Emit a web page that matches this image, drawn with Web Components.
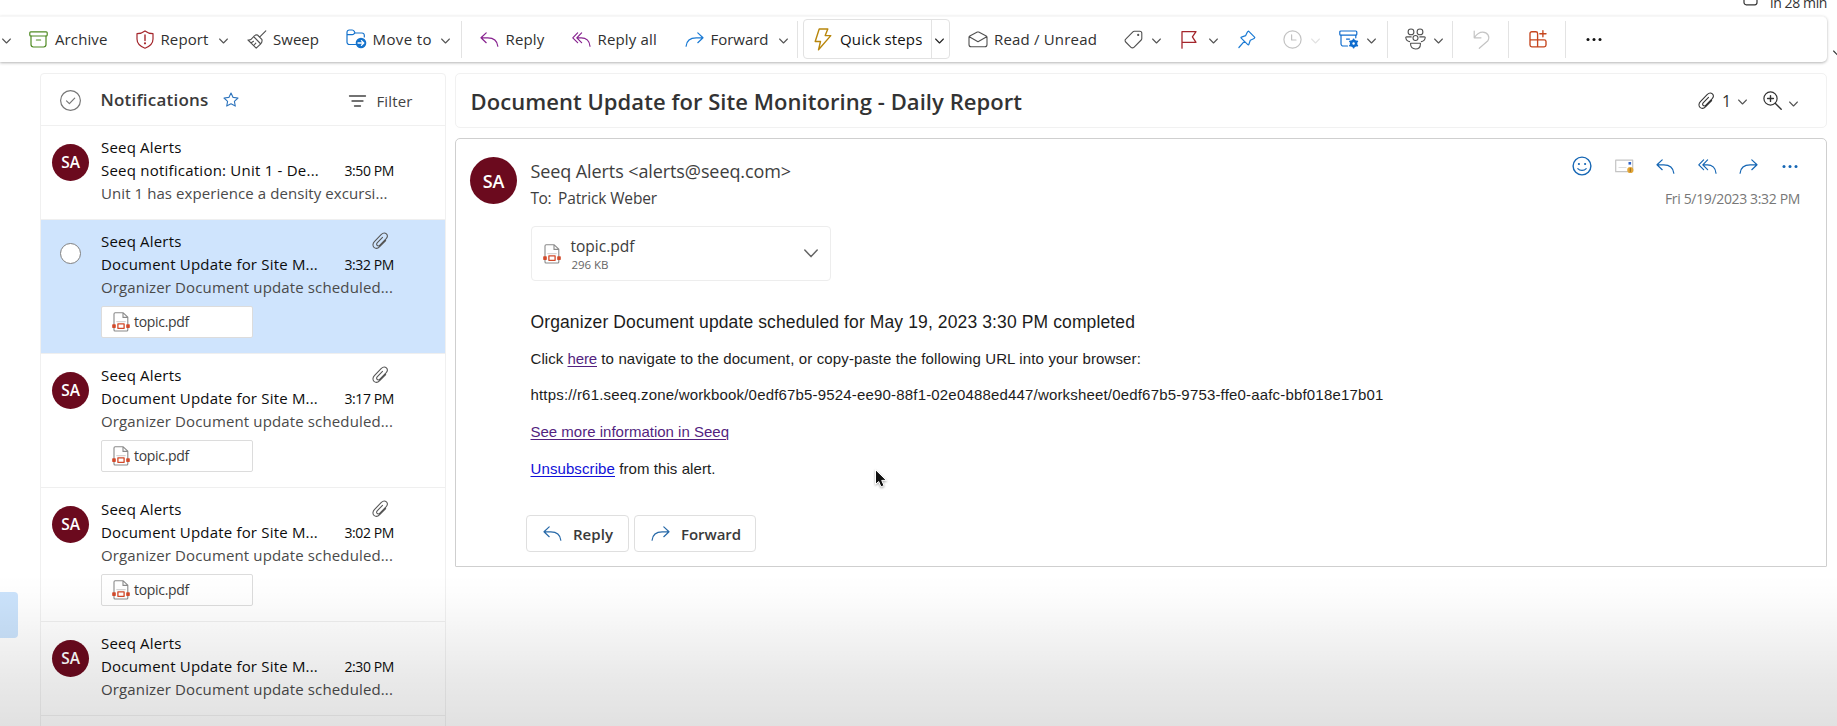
<!DOCTYPE html>
<html lang="en">
<head>
<meta charset="utf-8">
<title>Mail - Notifications</title>
<style>
html,body{margin:0;height:100%;overflow:hidden;background:#fff}
body{font-family:"Open Sans","Noto Sans",sans-serif;color:#323232}
</style>
</head>
<body>
<mail-app></mail-app>
<script>
const ICONS = {
chev:[9,6,'<path d="M.6 1l3.9 4L8.4 1" stroke-width="1.1"/>'],
chevL:[14,9,'<path d="M.8 1L7 7.6 13.2 1" stroke-width="1.5"/>'],
archive:[19,17,'<rect x=".8" y=".8" width="17.4" height="4.2" rx="1"/><path d="M2 5v8.6a2.4 2.4 0 0 0 2.4 2.4h10.2a2.4 2.4 0 0 0 2.4-2.4V5M7.4 9h4.2"/>'],
shield:[18,19,'<path d="M9 .9C6.6 2.7 4 3.6 1 3.7V9c0 4.300 2.900 7.300 8 9.200 5.100-1.900 8-4.900 8-9.200V3.700C14 3.600 11.400 2.700 9 .9z"/><path d="M9 5v5.600" stroke-width="1.400"/><circle cx="9" cy="13.300" r=".5"/>'],
broom:[20,19,'<g stroke-width="1.1"><path d="M18.800.8l-6 6M10.500 5l4.300 4.300c.6 1.700 0 3.500-1.300 4.800l-4.300 4.100L1 10c1.700.3 3.500-.6 4.600-2.300C6.800 5.800 8.600 4.600 10.500 5zM7 7l6.300 6.500M4.200 12.800l2.300-1.500M6.800 15.500l2-2.300"/></g>'],
move:[21,20,'<path d="M9.500 15.500H3.300A2.300 2.300 0 0 1 1 13.200V3.300A2.300 2.300 0 0 1 3.300 1h2.900c1 0 1.600.5 2 1.300L9 4H16a2.300 2.300 0 0 1 2.300 2.300V8M1 5.600h5.200c.8 0 1.200-.2 1.800-.8L9 4"/><circle cx="15" cy="14" r="5.300" fill="currentColor" stroke="none"/><path d="M12 14h5.600M15.400 11.600l2.400 2.400-2.400 2.400" stroke="#fff" stroke-width="1.300"/>'],
reply:[19,15,'<path d="M6.200.9L1 5.800l5.200 4.900M1.300 5.800h6.500c5.600 0 9.400 3 10 8.400"/>'],
replyall:[19,15,'<path d="M5.600.9L.8 5.800l4.800 4.900M9.600.9L4.800 5.800l4.800 4.900M5 5.800h4.300c4.700 0 8.300 3 8.700 8.400"/>'],
forward:[19,15,'<path d="M12.800.9L18 5.800l-5.200 4.900M17.700 5.800h-6.500C5.600 5.800 1.600 8.800 1.100 14.200"/>'],
bolt:[18,23,'<path d="M5.200 1h8.600l-2.600 6.600h5.600L4.500 21.800l2-8.300H1.200z" stroke-width="1.400"/>'],
mailopen:[20,17,'<path d="M1 6.200v7.300A2.300 2.300 0 0 0 3.300 15.800h13.400a2.300 2.300 0 0 0 2.300-2.300V6.200c0-.6-.3-1-.8-1.300L10.700 1.100a1.600 1.600 0 0 0-1.400 0L1.800 4.900c-.5.3-.8.7-.8 1.300zM1.300 5.800L10 10.700l8.700-4.900" stroke-width="1.1"/>'],
tag:[19,19,'<path d="M10.300 1.200h5.500a2 2 0 0 1 2 2v5.300c0 .6-.2 1.100-.6 1.500l-7.300 7.300a2 2 0 0 1-2.900 0l-5.300-5.300a2 2 0 0 1 0-2.900L8.900 1.800c.4-.4.9-.6 1.400-.6z" stroke-width="1.1"/><circle cx="14.200" cy="4.900" r=".5" fill="currentColor"/>'],
flag:[16,19,'<path d="M1 18.200V1.600h14l-3.600 5.300 3.600 5.400H1" stroke-width="1.300"/>'],
pin:[18,19,'<path d="M10.600 1.200l6.200 6.200c-.2.900-.8 1.300-1.700 1.600l-2.800 1.200-1.500 4.300c-.2.500-.6.600-1 .2L3.200 8.100c-.4-.4-.3-.9.200-1l4.300-1.500L9 2.700c.4-.9.800-1.300 1.600-1.500zM6.300 11.300L.9 17.500"/>'],
clock:[19,19,'<circle cx="9.500" cy="9.500" r="8.600"/><path d="M8.600 4.800V10h4.400"/>'],
archgear:[20,19,'<rect x=".8" y="1" width="17" height="4.200" rx="1"/><path d="M2 5.300v8.300A2.300 2.300 0 0 0 4.300 16h4.200M16.800 5.300v2.500M7.500 9.100h3"/><circle cx="14.600" cy="13.500" r="3.700" fill="currentColor" stroke="none"/><path d="M14.600 9.400v8.200M11 11.400l7.200 4.200M11 15.600l7.200-4.200" stroke-width="1.900"/><circle cx="14.600" cy="13.500" r="1.200" fill="#fff" stroke="none"/>'],
people:[21,22,'<g stroke-width="1.1"><circle cx="6" cy="3.900" r="2.900"/><circle cx="15" cy="3.900" r="2.900"/><circle cx="10.500" cy="10" r="2.500"/><path d="M6.200 8.900H1.600c-.6 0-.9.400-.8.900.3 2.200 1.600 3.500 3.800 3.800M14.800 8.900h4.600c.6 0 .9.400.8.900-.3 2.200-1.600 3.500-3.800 3.800M5.600 15.200h9.800v1.100c0 2.800-1.900 4.700-4.900 4.700s-4.900-1.900-4.900-4.700z"/></g>'],
undo:[17,19,'<path d="M1.200 1v6.800h6.800M1.500 7.400c2.300-3.400 5-5.300 8.200-5.300 4.800 0 7.600 4.600 5.200 8.600L6.300 18.300"/>'],
apps:[18,18,'<path d="M8.600 16.900H2.800A1.800 1.800 0 0 1 1 15.100V3.500a1.800 1.800 0 0 1 1.800-1.800h4a1.800 1.800 0 0 1 1.800 1.800v13.400h6.600a1.800 1.800 0 0 0 1.800-1.800v-3.500a1.800 1.800 0 0 0-1.800-1.800H1M13.900 .6v6.200M10.800 3.700H17" stroke-width="1.350"/>'],
dots:[16,5,'<g fill="currentColor" stroke="none"><circle cx="2" cy="2.500" r="1.500"/><circle cx="8" cy="2.500" r="1.500"/><circle cx="14" cy="2.500" r="1.500"/></g>'],
check:[21,21,'<circle cx="10.500" cy="10.500" r="9.900"/><path d="M6.500 10.800l2.900 2.900 5.300-5.500"/>'],
star:[16,15,'<path d="M8 1l2.100 4.400 4.900.6-3.600 3.300.9 4.800L8 11.800l-4.300 2.300.9-4.800L1 6l4.900-.6z" stroke-width="1.100"/>'],
filter:[17,12,'<path d="M.5 1h16M3 6h11M5.500 11h6" stroke-width="1.300"/>'],
clip:[16,17,'<path d="M13.700 8.600l-6 6.100c-1.700 1.700-4.200 2-5.700.7-1.600-1.500-1.300-4 .4-5.800l6.700-7C10.700 1 13 .6 14.400 1.900c1.400 1.400 1.100 3.400-.4 5L7.900 13.100c-.9.900-2.100 1-2.800.3-.8-.8-.6-1.900.3-2.800l5.100-5.200" stroke-width="1.050"/>'],
zoom:[19,19,'<circle cx="7.500" cy="7.500" r="6.600"/><path d="M12.200 12.200l6 6M7.500 4.600v5.800M4.600 7.500h5.800" stroke-width="1.400"/>'],
smile:[20,20,'<circle cx="10" cy="10" r="8.900" stroke-width="1.400"/><circle cx="6.900" cy="8" r="1.100" fill="currentColor" stroke="none"/><circle cx="13.100" cy="8" r="1.100" fill="currentColor" stroke="none"/><path d="M5.800 12.700c2 2.300 6.400 2.300 8.400 0"/>'],
card:[19,15,'<rect x=".7" y="1.200" width="17" height="11.500" stroke="#c4c4c4"/><path d="M4 8.500h7" stroke="#ddd"/><rect x="13.500" y="3" width="2.600" height="2.600" fill="#2f62c8" stroke="none"/><circle cx="15.300" cy="11" r="3.100" fill="#e3a535" stroke="none"/><path d="M15.300 9.500v3" stroke="#8a6420" stroke-width=".9"/>'],
pdf:[18,20,'<path d="M2 18V2A1.200 1.200 0 0 1 3.200.8h8l4.600 4.400V18a1 1 0 0 1-1 1H3a1 1 0 0 1-1-1zM11 1v4.400h4.600" stroke="#8a8a8a" stroke-width="1.100" fill="#fff"/><path d="M4.800 9.600h8.400" stroke="#d4d4d4"/><g fill="#d2492a" stroke="none"><rect x=".2" y="12.300" width="3.600" height="3.600" rx=".6"/><rect x="14.200" y="12.300" width="3.600" height="3.600" rx=".6"/></g><rect x="5.900" y="11.900" width="6.200" height="4.400" stroke="#d2492a" stroke-width="1.300" fill="#fff"/>'],
cal:[15,6,'<path d="M1 0v2.600A2.200 2.200 0 0 0 3.200 4.800h8.600A2.200 2.200 0 0 0 14 2.600V0"/>'],
cursor:[14,20,'<path d="M1.500 1v14.300l3.200-2.800 2.300 5.400 3-1.300-2.300-5.200h4.400z" fill="#111" stroke="#fff" stroke-width="1"/>']
};

class UiIcon extends HTMLElement{
  connectedCallback(){
    const [w,h,body]=ICONS[this.getAttribute('name')];
    const r=this.shadowRoot||this.attachShadow({mode:'open'});
    r.innerHTML=`<style>:host{display:block;flex:none;width:${w}px;height:${h}px}svg{display:block;overflow:visible}</style>
    <svg width="${w}" height="${h}" viewBox="0 0 ${w} ${h}" fill="none" stroke="currentColor" stroke-width="1.2" stroke-linejoin="round" stroke-linecap="round">${body}</svg>`;
  }
}
customElements.define('ui-icon',UiIcon);

/* Single line label that spreads its tracking so the run fills the width given in "w". */
class FitText extends HTMLElement{
  connectedCallback(){
    const r=this.shadowRoot||this.attachShadow({mode:'open'});
    r.innerHTML=`<style>:host{display:block;flex:none;white-space:pre}span{display:inline-block;text-decoration:var(--line,none);text-underline-offset:2px;text-decoration-thickness:1px}</style><span><slot></slot></span>`;
    const s=r.querySelector('span'),w=+this.getAttribute('w');
    const n=this.textContent.length;
    s.style.letterSpacing='0px';
    s.style.letterSpacing=((w-s.getBoundingClientRect().width)/n).toFixed(3)+'px';
    this.style.width=w+'px';
  }
}

class UiAvatar extends HTMLElement{
  connectedCallback(){
    const r=this.shadowRoot||this.attachShadow({mode:'open'});
    r.innerHTML=`<style>:host{display:flex;flex:none;align-items:center;justify-content:center;width:var(--d,37px);height:var(--d,37px);border-radius:50%;background:#6b0a1e;color:#fff;font-weight:560;font-size:var(--f,15.500px);line-height:1;letter-spacing:-.2px}</style><span><slot></slot></span>`;
  }
}
customElements.define('ui-avatar',UiAvatar);

class MailToolbar extends HTMLElement{
  connectedCallback(){
    const r=this.attachShadow({mode:'open'});
    r.innerHTML=`<style>
    :host{display:flex;align-items:center;box-sizing:border-box;width:1827px;height:46px;padding-bottom:1px;border-top:1px solid #f7f7f7;border-radius:0 5px 5px 0;box-shadow:0 1px 3px rgba(0,0,0,.3);color:#303030;font-size:15px;line-height:22px;background:#fff}
    i{display:block;flex:none;width:1px;height:37px;background:#e3e3e3}
    .c{color:#555;margin-top:3px}
    .q{display:flex;flex:none;align-items:center;height:40px;width:146.500px;box-sizing:border-box;border:1px solid #e2e2e2;border-radius:4px;color:#111}
    .q i{height:38px}
    </style>
    <ui-icon class="c" name="chev" style="margin-left:2px"></ui-icon>
    <ui-icon name="archive" style="margin-left:18px;color:#4f8a22"></ui-icon><fit-text w="52.500" style="margin-left:7px">Archive</fit-text>
    <ui-icon name="shield" style="margin-left:28px;color:#a4262c"></ui-icon><fit-text w="48" style="margin-left:7px">Report</fit-text>
    <ui-icon class="c" name="chev" style="margin-left:10.500px"></ui-icon>
    <ui-icon name="broom" style="margin-left:19px;color:#505050"></ui-icon><fit-text w="46" style="margin-left:6px">Sweep</fit-text>
    <ui-icon name="move" style="margin-left:27px;color:#1472cc"></ui-icon><fit-text w="59.500" style="margin-left:5.500px">Move to</fit-text>
    <ui-icon class="c" name="chev" style="margin-left:8.500px"></ui-icon>
    <i style="margin-left:11px"></i>
    <ui-icon name="reply" style="margin-left:18px;color:#87228f"></ui-icon><fit-text w="39" style="margin-left:7px">Reply</fit-text>
    <ui-icon name="replyall" style="margin-left:27px;color:#87228f"></ui-icon><fit-text w="59.500" style="margin-left:7px">Reply all</fit-text>
    <ui-icon name="forward" style="margin-left:27.500px;color:#1a7ad4"></ui-icon><fit-text w="58" style="margin-left:7px">Forward</fit-text>
    <ui-icon class="c" name="chev" style="margin-left:10px"></ui-icon>
    <i style="margin-left:9px"></i>
    <div class="q" style="margin-left:5.500px"><ui-icon name="bolt" style="margin-left:10px;color:#b8860b"></ui-icon><fit-text w="82.500" style="margin-left:8px">Quick steps</fit-text><i style="margin-left:8px"></i><ui-icon class="c" name="chev" style="margin-left:3.500px;color:#222"></ui-icon></div>
    <ui-icon name="mailopen" style="margin-left:18.500px;color:#505050"></ui-icon><fit-text w="103" style="margin-left:6px">Read / Unread</fit-text>
    <ui-icon name="tag" style="margin-left:27px;color:#505050"></ui-icon><ui-icon class="c" name="chev" style="margin-left:8.500px"></ui-icon>
    <ui-icon name="flag" style="margin-left:20px;color:#a4262c"></ui-icon><ui-icon class="c" name="chev" style="margin-left:12px"></ui-icon>
    <ui-icon name="pin" style="margin-left:20px;color:#1a7ad4"></ui-icon>
    <ui-icon name="clock" style="margin-left:27px;color:#c2c2c2"></ui-icon><ui-icon class="c" name="chev" style="margin-left:9px;color:#e2e2e2"></ui-icon>
    <ui-icon name="archgear" style="margin-left:19px;color:#0f6cce"></ui-icon><ui-icon class="c" name="chev" style="margin-left:8px"></ui-icon>
    <i style="margin-left:11px"></i>
    <ui-icon name="people" style="margin-left:17px;color:#505050"></ui-icon><ui-icon class="c" name="chev" style="margin-left:8.500px"></ui-icon>
    <i style="margin-left:9px"></i>
    <ui-icon name="undo" style="margin-left:20px;color:#c4c4c4"></ui-icon>
    <i style="margin-left:18px"></i>
    <ui-icon name="apps" style="margin-left:19.500px;color:#c5451d"></ui-icon>
    <i style="margin-left:18px"></i>
    <ui-icon name="dots" style="margin-left:20px;color:#111"></ui-icon>`;
  }
}

class MailRow extends HTMLElement{
  connectedCallback(){
    const r=this.attachShadow({mode:'open'}),a=k=>this.getAttribute(k),att=this.hasAttribute('attach'),sel=this.hasAttribute('selected');
    r.innerHTML=`<style>
    :host{display:flex;box-sizing:border-box;height:${att?134:94}px;border-bottom:1px solid #efefef;padding:10px 0 0 11px;font-size:15px;line-height:23.200px;color:#0c0c0c;${sel?'background:#cfe4fd;':''}}
    ui-avatar{margin-top:8px}
    .o{box-sizing:border-box;width:21px;height:21px;border:1.500px solid #808080;border-radius:50%;background:#fff;margin:13px 8px 0 8px}
    .b{margin-left:12px;width:293px}
    .l{display:flex;justify-content:space-between;height:23.200px}
    ui-icon.k{color:#555;margin:2px 6px 0 0}
    .p{color:#4a4a4a}
    .tm{font-size:14px}
    .f{display:flex;align-items:center;box-sizing:border-box;width:152px;height:32px;margin-top:6.500px;border:1px solid #dcdcdc;border-radius:2px;background:#fff;padding-left:10px;font-size:14px;color:#3c3c3c}
    </style>
    ${sel?'<div class="o"></div>':'<ui-avatar>SA</ui-avatar>'}
    <div class="b">
    <div class="l"><fit-text w="80.500">Seeq Alerts</fit-text>${att?'<ui-icon class="k" name="clip"></ui-icon>':''}</div>
    <div class="l"><fit-text w="${a('sw')}">${a('subject')}</fit-text><fit-text class="tm" w="49.500">${a('time')}</fit-text></div>
    <div class="l p"><fit-text w="${a('pw')}">${a('preview')}</fit-text></div>
    ${att?'<div class="f"><ui-icon name="pdf"></ui-icon><fit-text w="55" style="margin-left:4px">topic.pdf</fit-text></div>':''}
    </div>`;
  }
}

class MailList extends HTMLElement{
  connectedCallback(){
    const r=this.attachShadow({mode:'open'});
    const d='subject="Document Update for Site M..." sw="217" preview="Organizer Document update scheduled..." pw="292"';
    r.innerHTML=`<style>
    :host{display:block;box-sizing:border-box;width:406px;height:760px;border:1px solid #f0f0f0;border-radius:4px}
    header{display:flex;align-items:center;height:51px;border-bottom:1px solid #f0f0f0;line-height:22px;padding-left:19px}
    .h{font-size:17px;font-weight:560;color:#3a3a3a}
    .g{font-size:15px;color:#444}
    </style>
    <header><ui-icon name="check" style="color:#777;margin-top:2px"></ui-icon><fit-text class="h" w="108" style="margin-left:19.500px;margin-top:1px">Notifications</fit-text><ui-icon name="star" style="margin-left:14.500px;color:#2e74bd"></ui-icon><ui-icon name="filter" style="margin-left:109.500px;color:#444;margin-top:3px"></ui-icon><fit-text class="g" w="36" style="margin-left:11px;margin-top:3px">Filter</fit-text></header>
    <mail-row subject="Seeq notification: Unit 1 - De..." sw="218" time="3:50 PM" preview="Unit 1 has experience a density excursi..." pw="286.500"></mail-row>
    <mail-row attach selected ${d} time="3:32 PM"></mail-row>
    <mail-row attach ${d} time="3:17 PM"></mail-row>
    <mail-row attach ${d} time="3:02 PM"></mail-row>
    <mail-row ${d} time="2:30 PM"></mail-row>`;
  }
}

class ReadingPane extends HTMLElement{
  connectedCallback(){
    const r=this.attachShadow({mode:'open'});
    r.innerHTML=`<style>
    :host{display:block;width:1372px}
    .s{display:flex;align-items:center;box-sizing:border-box;height:55px;border:1px solid #f1f1f1;border-radius:5px;padding-left:14.500px;color:#333}
    .s .t{font-size:22px;font-weight:560;line-height:30px}
    .m{box-sizing:border-box;height:429px;margin-top:10px;border:1px solid #cfcfcf;border-radius:5px 5px 1px 1px;padding:18px 26px 0 14px}
    .top{display:flex;height:69px}
    .who{margin-left:13.500px;flex:1;color:#3e3e3e}
    .n{font-size:18px;line-height:28px}
    .to{display:flex;font-size:15.500px;line-height:22px;margin-top:2px}
    .acts{display:flex;align-items:center;height:20px;margin-top:-1px;color:#1566b4;justify-content:flex-end}
    .acts ui-icon+ui-icon{margin-left:22.500px}
    .d{font-size:14px;line-height:20px;color:#777;margin:12.500px 0 0 auto}
    .in{margin-left:60.500px}
    .f{display:flex;align-items:center;box-sizing:border-box;width:300px;height:55px;border:1px solid #ededed;border-radius:4px;color:#3c3c3c;padding-left:11px}
    .body{font-family:"Liberation Sans",Arial,sans-serif;font-size:15px;color:#1c1c1c;line-height:20px;margin-top:30.500px}
    .body>*{margin-bottom:16.600px}
    .r{display:flex}
    fit-text.u{--line:underline;color:#531f80}
    .btns{display:flex;gap:5px;margin:36.500px 0 0 -5px}
    .btn{display:flex;align-items:center;box-sizing:border-box;height:37px;border:1px solid #dfdfdf;border-radius:4px;font-size:15px;line-height:22px;font-weight:560;color:#3a3a3a;padding-left:16px}
    .btn ui-icon{color:#2769a8}
    .s ui-icon[name=chev]{color:#555}
    </style>
    <div class="s"><fit-text class="t" w="551.500">Document Update for Site Monitoring - Daily Report</fit-text>
      <ui-icon name="clip" style="margin-left:676px"></ui-icon><fit-text w="8" style="margin-left:8px;font-size:16px;line-height:22px">1</fit-text><ui-icon name="chev" style="margin:2px 0 0 7.500px"></ui-icon><ui-icon name="zoom" style="margin-left:16px"></ui-icon><ui-icon name="chev" style="margin:6px 0 0 7.500px"></ui-icon></div>
    <div class="m">
      <div class="top"><ui-avatar style="--d:47px;--f:18px">SA</ui-avatar>
        <div class="who"><fit-text class="n" w="260.500">Seeq Alerts &lt;alerts@seeq.com&gt;</fit-text><div class="to"><fit-text w="20.500">To:</fit-text><fit-text w="99" style="margin-left:7px">Patrick Weber</fit-text></div></div>
        <div><div class="acts"><ui-icon name="smile"></ui-icon><ui-icon name="card"></ui-icon><ui-icon name="reply"></ui-icon><ui-icon name="replyall"></ui-icon><ui-icon name="forward"></ui-icon><ui-icon name="dots" style="margin:0 2px 0 24px"></ui-icon></div><fit-text class="d" w="135">Fri 5/19/2023 3:32 PM</fit-text></div>
      </div>
      <div class="in">
        <div class="f"><ui-icon name="pdf"></ui-icon><div style="margin:1px 0 0 10px"><fit-text w="64" style="font-size:15.500px;line-height:20px">topic.pdf</fit-text><fit-text w="37" style="font-size:11.500px;line-height:17px;color:#666;margin-left:1px">296 KB</fit-text></div><ui-icon name="chevL" style="margin-left:169.500px;color:#666"></ui-icon></div>
        <div class="body">
          <fit-text w="604.500" style="font-size:17.500px;margin-bottom:17.300px">Organizer Document update scheduled for May 19, 2023 3:30 PM completed</fit-text>
          <div class="r"><fit-text w="37">Click </fit-text><fit-text class="u" w="29.500">here</fit-text><fit-text w="544"> to navigate to the document, or copy-paste the following URL into your browser:</fit-text></div>
          <fit-text w="853">https://r61.seeq.zone/workbook/0edf67b5-9524-ee90-88f1-02e0488ed447/worksheet/0edf67b5-9753-ffe0-aafc-bbf018e17b01</fit-text>
          <fit-text class="u" w="198.500">See more information in Seeq</fit-text>
          <div class="r"><fit-text class="u" w="84.500" style="color:#1010d8">Unsubscribe</fit-text><fit-text w="100.500"> from this alert.</fit-text></div>
        </div>
        <div class="btns"><div class="btn" style="width:103px"><ui-icon name="reply"></ui-icon><fit-text w="40" style="margin-left:11.500px">Reply</fit-text></div><div class="btn" style="width:122.500px"><ui-icon name="forward"></ui-icon><fit-text w="60" style="margin-left:11.500px">Forward</fit-text></div></div>
      </div>
    </div>`;
  }
}

class MailApp extends HTMLElement{
  connectedCallback(){
    const r=this.attachShadow({mode:'open'});
    r.innerHTML=`<style>
    :host{display:block;position:relative;width:1837px;height:726px;overflow:hidden}
    .strip{display:flex;height:16px;overflow:hidden;justify-content:flex-end;padding-right:10px;color:#333}
    .main{display:flex;margin-top:11px}
    .rail{width:40px;flex:none;padding-top:519px}
    .rail div{width:17.500px;height:46px;background:#cbe3fc;border-radius:0 4px 4px 0}
    reading-pane{margin-left:9px}
    .edge{position:absolute;left:1833px;top:50px;color:#333}
    .cur{position:absolute;left:874px;top:469px;filter:drop-shadow(0 1px 1px rgba(0,0,0,.35))}
    .shade{position:absolute;inset:566px 0 0 0;pointer-events:none;background:linear-gradient(rgba(0,0,0,0) 5%,rgba(0,0,0,.006) 15%,rgba(0,0,0,.018) 25%,rgba(0,0,0,.052) 46%,rgba(0,0,0,.086) 71%,rgba(0,0,0,.118))}
    </style>
    <div class="strip"><ui-icon name="cal"></ui-icon><fit-text w="57" style="font-size:14px;line-height:20px;margin:-7px 0 0 12px">in 28 min</fit-text></div>
    <mail-toolbar></mail-toolbar>
    <div class="main"><div class="rail"><div></div></div><mail-list></mail-list><reading-pane></reading-pane></div>
    <ui-icon class="edge" name="chev"></ui-icon>
    <ui-icon class="cur" name="cursor"></ui-icon>
    <div class="shade"></div>`;
  }
}
customElements.define('mail-app',MailApp);
customElements.define('mail-toolbar',MailToolbar);
customElements.define('mail-list',MailList);
customElements.define('mail-row',MailRow);
customElements.define('reading-pane',ReadingPane);
customElements.define('fit-text',FitText);
</script>
</body>
</html>
